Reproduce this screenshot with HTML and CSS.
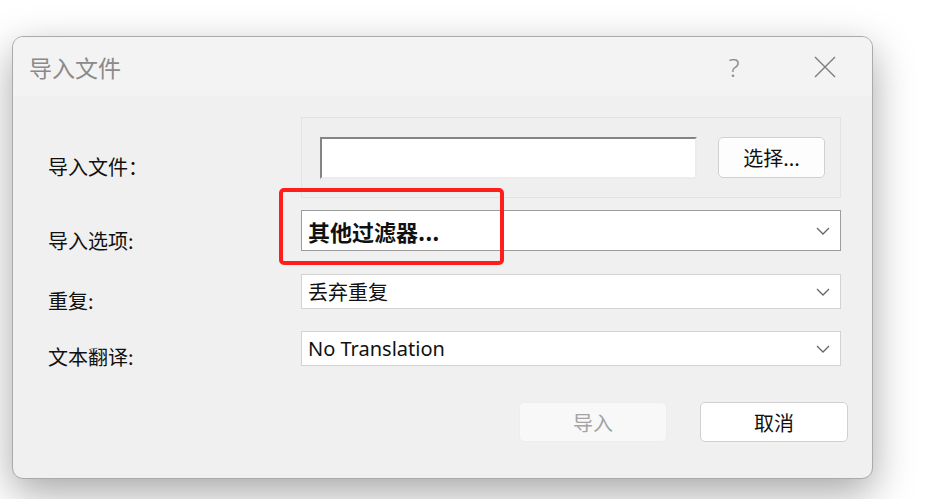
FILE: index.html
```html
<!DOCTYPE html>
<html lang="zh-CN">
<head>
  <meta charset="UTF-8" />
  <meta name="viewport" content="width=device-width, initial-scale=1.0"/>
  <title>导入文件</title>
  <link rel="stylesheet" href="styles.css">
</head>
<body>
  <div class="window">
    <div class="titlebar">
      <span class="title">导入文件</span>
      <span class="help">?</span>
      <span class="close">
        <svg width="22" height="22" viewBox="0 0 22 22"><path d="M1 1 L21 21 M21 1 L1 21" stroke="#7c7c7c" stroke-width="1.4" fill="none"/></svg>
      </span>
    </div>

    <div class="form">
      <label class="label l-file">导入文件：</label>
      <div class="group">
        <div class="file-input"></div>
        <button class="btn pick">选择...</button>
      </div>

      <label class="label l-option">导入选项:</label>
      <div class="combo strong">
        <span class="value bold">其他过滤器...</span>
        <svg class="chev" width="14" height="8" viewBox="0 0 14 8"><path d="M1 1 L7 7 L13 1" stroke="#666" stroke-width="1.3" fill="none"/></svg>
        <div class="highlight"></div>
      </div>

      <label class="label">重复:</label>
      <div class="combo small">
        <span class="value">丢弃重复</span>
        <svg class="chev" width="14" height="8" viewBox="0 0 14 8"><path d="M1 1 L7 7 L13 1" stroke="#666" stroke-width="1.3" fill="none"/></svg>
      </div>

      <label class="label l-trans">文本翻译:</label>
      <div class="combo small">
        <span class="value latin">No Translation</span>
        <svg class="chev" width="14" height="8" viewBox="0 0 14 8"><path d="M1 1 L7 7 L13 1" stroke="#666" stroke-width="1.3" fill="none"/></svg>
      </div>
    </div>

    <div class="actions">
      <button class="btn action disabled">导入</button>
      <button class="btn action">取消</button>
    </div>
  </div>
</body>
</html>
```

FILE: styles.css
```css
html, body {
  margin: 0;
  height: 100%;
  overflow: hidden;
}
body {
  background-color: #ffffff;
  padding: 36px 0 0 12px;
  box-sizing: border-box;
  font-family: "Noto Sans", "Noto Sans CJK SC", sans-serif;
  color: #111;
}
.window {
  width: 861px;
  height: 443px;
  box-sizing: border-box;
  background-color: #f0f0f0;
  border: 1px solid #aaaaaa;
  border-radius: 11px;
  box-shadow: 0 14px 40px rgba(0, 0, 0, 0.35);
  overflow: hidden;
}
.titlebar {
  height: 59px;
  display: flex;
  align-items: center;
  background-color: #f3f3f3;
  padding: 0 24px 0 16px;
}
.title {
  font-family: "Noto Sans CJK SC", sans-serif;
  font-size: 23px;
  color: #8a8a8a;
  flex: 1;
}
.help {
  width: 46px;
  text-align: center;
  font-family: "Noto Sans", sans-serif;
  font-weight: 300;
  font-size: 26px;
  color: #8a8a8a;
  margin-right: 45px;
}
.close {
  width: 46px;
  display: flex;
  justify-content: center;
}
.form {
  display: grid;
  grid-template-columns: 253px 540px;
  padding: 21px 0 0 35px;
}
.label {
  font-family: "Noto Sans CJK SC", sans-serif;
  font-size: 20px;
  line-height: 24px;
  align-self: start;
  padding-top: 15px;
  color: #111;
}
.label.l-file {
  padding-top: 38px;
}
.label.l-option {
  padding-top: 19px;
}
.label.l-trans {
  padding-top: 14px;
}
.group {
  height: 81px;
  box-sizing: border-box;
  border: 1px solid #e3e3e3;
  background-color: #efefef;
  display: flex;
  align-items: center;
  padding-left: 18px;
  margin-bottom: 12px;
}
.file-input {
  width: 377px;
  height: 42px;
  box-sizing: border-box;
  background-color: #fff;
  border-top: 2px solid #848484;
  border-left: 2px solid #848484;
  border-bottom: 2px solid #ececec;
  border-right: 2px solid #ececec;
}
.btn {
  font-family: "Noto Sans CJK SC", sans-serif;
  font-size: 20px;
  color: #111;
  background-color: #fdfdfd;
  border: 1px solid #d0d0d0;
  border-radius: 5px;
  padding: 0;
  box-sizing: border-box;
}
.pick {
  width: 107px;
  height: 41px;
  margin-left: 21px;
}
.combo {
  position: relative;
  box-sizing: border-box;
  display: flex;
  align-items: center;
  justify-content: space-between;
  background-color: #fff;
  border: 1px solid #d3d3d3;
  padding: 0 10px 0 6px;
}
.combo.strong {
  height: 41px;
  border-color: #9c9c9c;
  margin-bottom: 23px;
}
.combo.small {
  height: 35px;
  margin-bottom: 22px;
}
.value {
  font-family: "Noto Sans CJK SC", sans-serif;
  font-size: 20px;
  color: #111;
}
.value.bold {
  font-weight: 700;
  font-size: 22px;
}
.value.latin {
  font-family: "Noto Sans", sans-serif;
  font-size: 20px;
}
.highlight {
  position: absolute;
  left: -23px;
  top: -23px;
  width: 225px;
  height: 77px;
  box-sizing: border-box;
  border: 4px solid #ff1e1a;
  border-radius: 5px;
  pointer-events: none;
}
.actions {
  display: flex;
  justify-content: flex-end;
  gap: 33px;
  padding: 14px 24px 0 0;
}
.action {
  width: 148px;
  height: 40px;
  background-color: #fff;
}
.action.disabled {
  background-color: #f8f8f8;
  border-color: #ededed;
  color: #a3a3a3;
}
```
